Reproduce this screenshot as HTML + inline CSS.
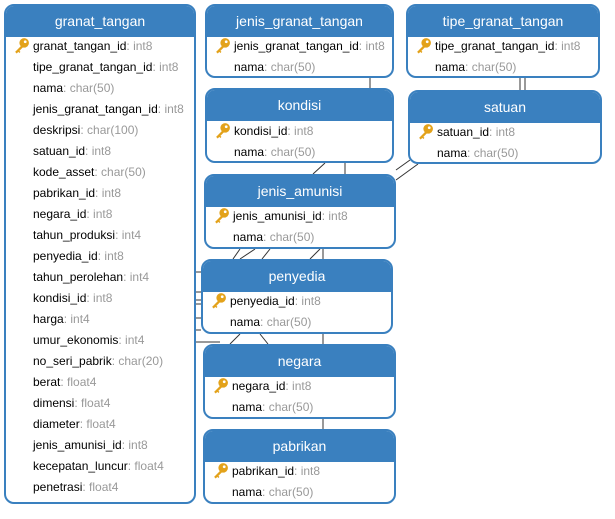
<!DOCTYPE html>
<html><head><meta charset="utf-8"><style>
body{margin:0;width:615px;height:519px;background:#fff;position:relative;overflow:hidden;font-family:"Liberation Sans",Arial,sans-serif}
.t{position:absolute;border:2px solid #3a80bf;border-radius:10px;background:#fff;box-sizing:border-box;overflow:hidden}
.h{background:#3a80bf;color:#fff;font-size:14px;text-align:center;height:31px;line-height:31px}
.r{position:absolute;left:28px;font-size:12px;color:#000;white-space:nowrap;line-height:14px}
.r span{color:#999}
.k{position:absolute;left:8px;width:17px;height:17px}
svg.l{position:absolute;left:0;top:0}
</style></head><body>
<svg class="l" width="615" height="519"><g stroke="#333" stroke-width="1" fill="none">
<line x1="370" y1="78" x2="370" y2="88"/>
<line x1="520" y1="78" x2="520" y2="90"/><line x1="525" y1="78" x2="525" y2="90"/>
<line x1="325" y1="163" x2="313" y2="174"/><line x1="345" y1="163" x2="345" y2="174"/>
<line x1="410" y1="160" x2="396" y2="170"/><line x1="418" y1="164" x2="396" y2="180"/>
<line x1="240" y1="249" x2="233" y2="259"/><line x1="255" y1="249" x2="240" y2="259"/>
<line x1="270" y1="249" x2="262" y2="259"/><line x1="320" y1="249" x2="310" y2="259"/>
<line x1="323" y1="249" x2="323" y2="259"/>
<line x1="196" y1="272" x2="201" y2="272"/><line x1="196" y1="292" x2="201" y2="292"/><line x1="196" y1="300" x2="201" y2="300"/><line x1="196" y1="304" x2="201" y2="304"/><line x1="196" y1="318" x2="201" y2="318"/><line x1="196" y1="330" x2="201" y2="330"/>
<line x1="196" y1="342" x2="220" y2="342"/><line x1="230" y1="344" x2="240" y2="334"/>
<line x1="260" y1="334" x2="268" y2="344"/><line x1="323" y1="334" x2="323" y2="344"/>
<line x1="323" y1="419" x2="323" y2="429"/>
</g></svg>

<div class="t" style="left:4px;top:4px;width:192px;height:500px"><div class="h">granat_tangan</div></div>
<div class="t" style="left:205px;top:4px;width:189px;height:74px"><div class="h">jenis_granat_tangan</div></div>
<div class="t" style="left:406px;top:4px;width:194px;height:74px"><div class="h">tipe_granat_tangan</div></div>
<div class="t" style="left:205px;top:88px;width:189px;height:75px"><div class="h">kondisi</div></div>
<div class="t" style="left:408px;top:90px;width:194px;height:74px"><div class="h">satuan</div></div>
<div class="t" style="left:204px;top:174px;width:192px;height:75px"><div class="h">jenis_amunisi</div></div>
<div class="t" style="left:201px;top:259px;width:192px;height:75px"><div class="h">penyedia</div></div>
<div class="t" style="left:203px;top:344px;width:193px;height:75px"><div class="h">negara</div></div>
<div class="t" style="left:203px;top:429px;width:193px;height:75px"><div class="h">pabrikan</div></div>

<div id="rows"></div>
<script>
var key='<svg viewBox="0 0 16 16" width="17" height="17"><circle cx="10.5" cy="5.5" r="4.5" fill="#e3a21a"/><circle cx="11.5" cy="4.5" r="1.3" fill="#fff"/><path d="M7.5 8.5 L2 14 L3.5 15.5 L5 14 L6 15 L7 14 L6 13 L9.5 9.5Z" fill="#e3a21a"/></svg>';
var T=[
[4,39,["granat_tangan_id|int8","tipe_granat_tangan_id|int8","nama|char(50)","jenis_granat_tangan_id|int8","deskripsi|char(100)","satuan_id|int8","kode_asset|char(50)","pabrikan_id|int8","negara_id|int8","tahun_produksi|int4","penyedia_id|int8","tahun_perolehan|int4","kondisi_id|int8","harga|int4","umur_ekonomis|int4","no_seri_pabrik|char(20)","berat|float4","dimensi|float4","diameter|float4","jenis_amunisi_id|int8","kecepatan_luncur|float4","penetrasi|float4"]],
[205,39,["jenis_granat_tangan_id|int8","nama|char(50)"]],
[406,39,["tipe_granat_tangan_id|int8","nama|char(50)"]],
[205,124,["kondisi_id|int8","nama|char(50)"]],
[408,125,["satuan_id|int8","nama|char(50)"]],
[204,209,["jenis_amunisi_id|int8","nama|char(50)"]],
[201,294,["penyedia_id|int8","nama|char(50)"]],
[203,379,["negara_id|int8","nama|char(50)"]],
[203,464,["pabrikan_id|int8","nama|char(50)"]]];
var h='';
T.forEach(function(t){t[2].forEach(function(r,i){var p=r.split('|');var y=t[1]+i*21;
if(i==0)h+='<div class="k" style="left:'+(t[0]+9)+'px;top:'+(y-2)+'px">'+key+'</div>';
h+='<div class="r" style="left:'+(t[0]+29)+'px;top:'+y+'px">'+p[0]+'<span>: '+p[1]+'</span></div>';});});
document.getElementById('rows').innerHTML=h;
</script>
</body></html>
